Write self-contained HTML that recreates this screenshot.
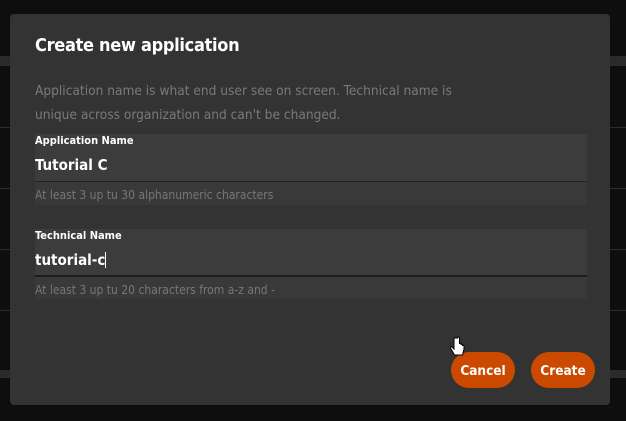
<!DOCTYPE html>
<html><head><style>
body{margin:0;width:626px;height:421px;background:#0e0e0e;position:relative;overflow:hidden;font-family:"DejaVu Sans","Liberation Sans",sans-serif}
.band{position:absolute;left:0;width:626px;height:10px;background:#2a2a2a;top:56px}
.ln{position:absolute;left:0;width:626px;height:1px;background:#2c2c2c}
.dlg{position:absolute;left:10px;top:14px;width:600px;height:391px;background:#333;border-radius:4px}
h1{position:absolute;left:25px;top:21px;margin:0;font:bold 18px "DejaVu Sans Condensed","Liberation Sans Narrow",sans-serif;color:#fff;letter-spacing:-0.3px}
.desc{position:absolute;left:25px;top:65px;width:425px;font-size:13.6px;line-height:24px;color:#7a7a7a;font-family:"DejaVu Sans Condensed",sans-serif}
.f{position:absolute;left:25px;width:552px;background:#3c3c3c}
.lab{position:absolute;left:0;top:0;font:bold 11px "DejaVu Sans Condensed",sans-serif;color:#fff}
.val{position:absolute;left:0;top:22px;font:bold 15px "DejaVu Sans Condensed",sans-serif;color:#fff}
.ul{position:absolute;left:0;width:552px;height:1px;background:#222}
.help{position:absolute;left:0;width:552px;height:23px;background:#393939;font:12px "DejaVu Sans Condensed",sans-serif;color:#777;line-height:26px}
.btn{position:absolute;top:338px;width:64px;height:36px;border-radius:18px;background:#cc4a00;color:#fff;font:bold 13.5px "DejaVu Sans Condensed",sans-serif;text-align:center;line-height:39px}
</style></head><body>
<div class="band"></div>
<div class="ln" style="top:127px"></div>
<div class="ln" style="top:188px"></div>
<div class="ln" style="top:249px"></div>
<div class="ln" style="top:310px"></div>
<div class="band" style="top:370px;height:8px"></div>
<div class="dlg">
<h1>Create new application</h1>
<div class="desc">Application name is what end user see on screen. Technical name is unique across organization and can't be changed.</div>
<div class="f" style="top:120px;height:71px">
<div class="lab">Application Name</div>
<div class="val">Tutorial C</div>
<div class="ul" style="top:47px"></div>
<div class="help" style="top:48px">At least 3 up tu 30 alphanumeric characters</div>
</div>
<div class="f" style="top:215px;height:70px">
<div class="lab">Technical Name</div>
<div class="val">tutorial-c<span style="display:inline-block;width:1px;height:16px;background:#fff;vertical-align:-3px"></span></div>
<div class="ul" style="top:46px;height:2px;background:#1c1c1c"></div>
<div class="help" style="top:48px;height:22px">At least 3 up tu 20 characters from a-z and -</div>
</div>
<div class="btn" style="left:441px">Cancel</div>
<div class="btn" style="left:521px">Create</div>
</div>
<svg style="position:absolute;left:449px;top:336px" width="18" height="22" viewBox="0 0 18 22"><path d="M5 2v11l-2-2c-1-1-2 0-1.5 1l4 7h8l1.5-6v-3c0-1-1.5-1-1.5 0v-1c0-1-1.5-1-1.5 0v-1c0-1-1.5-1-1.5 0V2c0-1.3-2-1.3-2 0z" fill="#fff" stroke="#000" stroke-width="1"/></svg>
</body></html>
